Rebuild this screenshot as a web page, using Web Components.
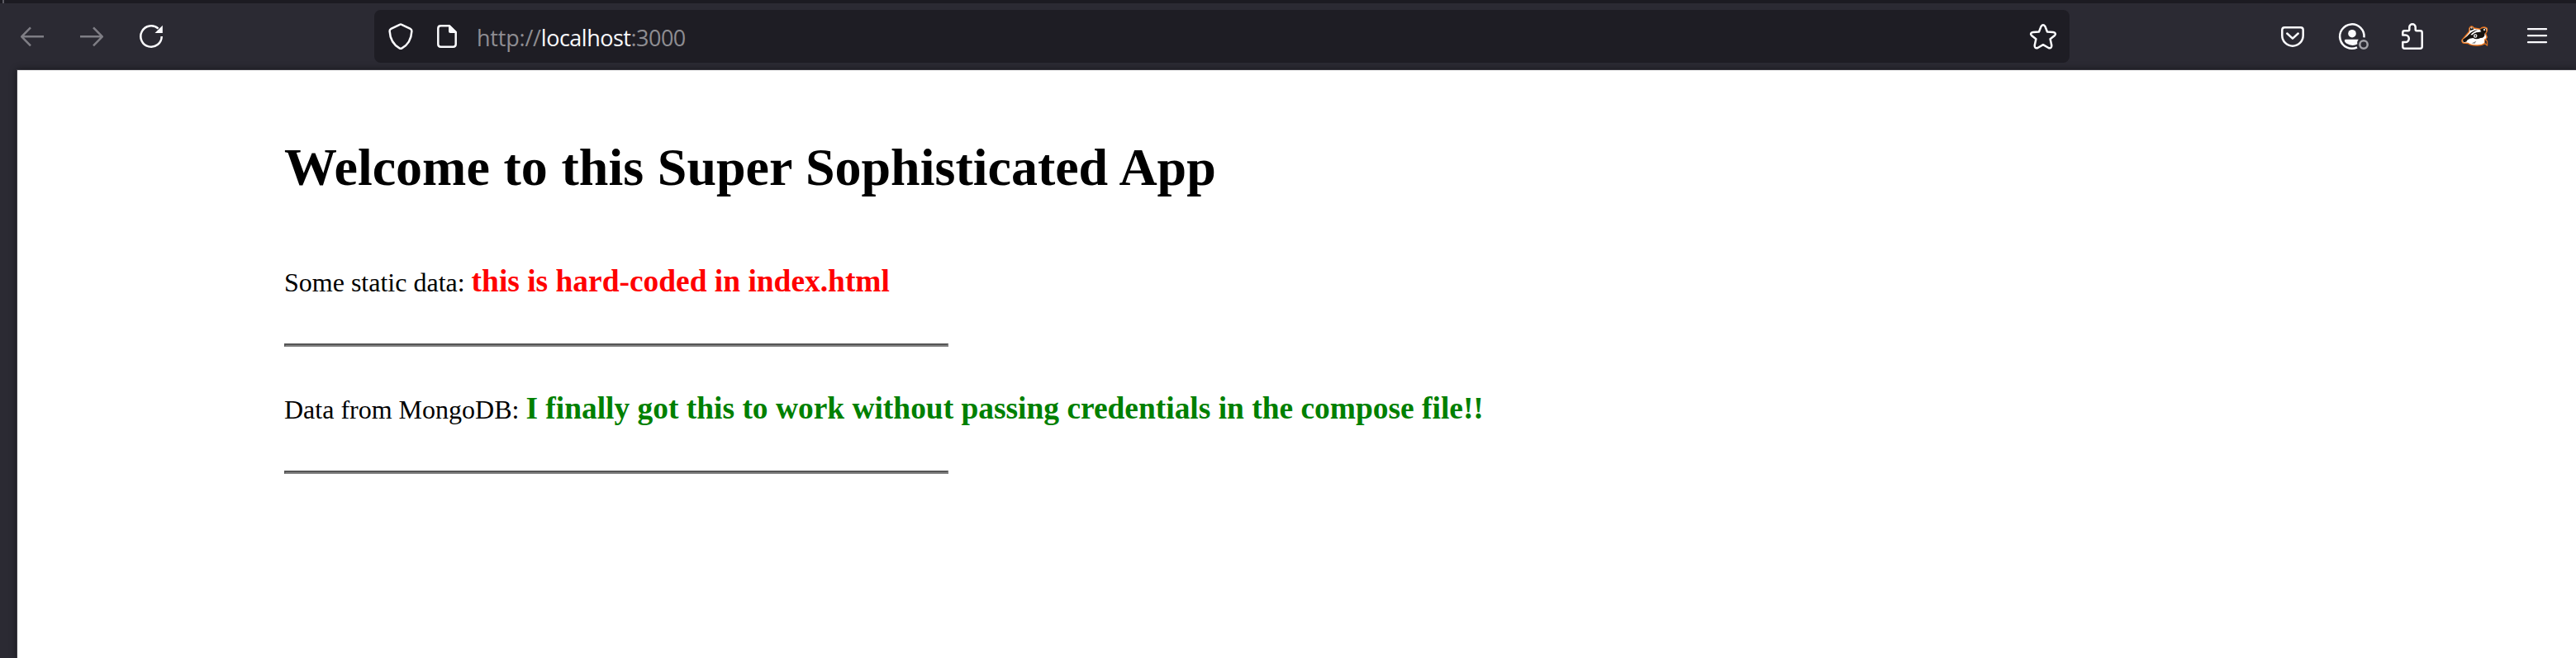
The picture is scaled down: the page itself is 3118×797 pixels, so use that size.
<!DOCTYPE html>
<html lang="en">
<head>
<meta charset="utf-8">
<title>Super Sophisticated App</title>
<style>
html, body { margin: 0; height: 100%; overflow: hidden; background: #2b2a33; }
</style>
</head>
<body>
<browser-window>
  <browser-toolbar slot="toolbar"></browser-toolbar>
  <app-page>
    <span slot="title">Welcome to this Super Sophisticated App</span>
    <data-row color="#ff0000" label="Some static data:">this is hard-coded in index.html</data-row>
    <data-row color="#008000" label="Data from MongoDB:">I finally got this to work without passing credentials in the compose file!!</data-row>
  </app-page>
</browser-window>

<script>
const ICONS = {
  back: '<path d="M30 16.3H3M14 5.3L3.2 16.3L14 27.3" stroke="#7f7e85"/>',
  forward: '<path d="M2 16.3H29M18 5.3L28.8 16.3L18 27.3" stroke="#7f7e85"/>',
  reload: '<path d="M28.7 16A12.7 12.7 0 1 1 24.6 6.7"/><path d="M29.8 2.7V12H20.5Z" fill="currentColor" stroke="none"/>',
  shield: '<path d="M14.8 1.8Q16 1 17.2 1.8L27.7 6.8Q29.5 7.7 29.4 9.7C28.8 19.5 25.5 26 17.5 30.3Q16 31.1 14.5 30.3C6.5 26 3.2 19.5 2.6 9.7Q2.5 7.7 4.3 6.8Z"/>',
  page: '<path d="M8.5 3.3H19L26.7 11V25.5Q26.7 28.7 23.5 28.7H8.5Q5.3 28.7 5.3 25.5V6.5Q5.3 3.3 8.5 3.3Z"/><path d="M18 2.5H19.5L27.5 10.5V12H20Q18 12 18 10Z" fill="currentColor" stroke="none"/>',
  star: '<path d="M13.6 3.9Q16 .6 18.400 3.900L21 10.500L28 11.100Q32.600 12 30 15L24.600 19.300L26.300 26.900Q26.300 31.300 22.600 30L16 26.200L9.400 30Q5.700 31.300 5.700 26.900L7.400 19.300L2 15Q-.600 12 4 11.100L11 10.500Z"/>',
  pocket: '<path d="M6.300 5.300H25.700Q28.700 5.300 28.700 8.300V15A12.700 12.700 0 0 1 3.300 15V8.300Q3.300 5.300 6.300 5.300Z"/><path d="M9.300 12.500L16 18.700L22.700 12.500" stroke-linecap="round"/>',
  account: '<path d="M22 29.400A14.700 14.700 0 1 1 30.500 17.300"/><circle cx="16" cy="12.700" r="4.800" fill="currentColor" stroke="none"/><path d="M8.500 19.700H23.800Q21.300 23 22.600 25.300Q16 29 9 24.500Q6.700 22.500 6.800 21Q7 19.700 8.500 19.700Z" fill="currentColor" stroke="none"/><circle cx="30" cy="26" r="4.700" stroke="#a3a2a8"/>',
  puzzle: '<path d="M7.500 9.300H11.800Q13.300 9.300 13.300 7.800V5A3.700 3.700 0 0 1 20.700 5V7.800Q20.700 9.300 22.200 9.300H26.500Q28.700 9.300 28.700 11.500V28.500Q28.700 30.700 26.500 30.700H7.500Q5.300 30.700 5.300 28.500V23H8.600A4.200 4.200 0 0 0 8.600 14.600H5.300V11.500Q5.300 9.300 7.500 9.300Z"/>',
  badger: `<path d="M1 20.500L9.500 10.500L10 6Q12.500 1.800 15.500 6L23 7.200Q26.500 3.700 31 6Q32.500 9 29.500 12.500L31.200 17L29.500 20L31.500 22V27L28.500 24.500Q25 27.500 18 27Q11.500 27 8.500 24.500L2.500 24Q.5 23 1 20.500Z" fill="#fff" stroke="#e8731c" stroke-width="1.400"/>
    <path d="M28.500 19.500L31.300 22V26.500L28.300 24Z" fill="#2b2a33" stroke="#e8731c" stroke-width=".8"/>
    <g stroke="none"><path d="M10.500 9L11 6.200Q12.500 3.800 14.500 6L15 8Z M22.500 8Q26.500 4.500 30.200 7Q31.200 9.500 29 12.500L25.500 12Z" fill="#15120f"/>
    <path d="M2 20Q7 16.500 10.500 12.500Q15 8.500 20 8Q14 11 11.500 14.500Q17 10.500 21.500 11Q26 9 28.500 12Q29 18 23.500 18Q18 20.500 14.500 18Q10 18 7.500 20.500Q6.500 24 2.500 22.800Z" fill="#15120f"/>
    <path d="M11.500 14Q17 8.200 24.500 8.500Q18 9.800 13.300 14.500Z" fill="#fff"/><circle cx="17.200" cy="15.500" r="2.200" fill="#fff"/><circle cx="17.300" cy="15.500" r="1" fill="#15120f"/>
    <path d="M12.500 24.500L18.500 21.500L16.500 24.800Z" fill="#8b8988"/></g><circle cx="12.700" cy="5.900" r=".9" fill="#d7d3cf" stroke="none"/><circle cx="28" cy="8" r="1.200" fill="#d7d3cf" stroke="none"/>`,
  menu: '<path d="M5 7.200H27M5 15.200H27M5 23.200H27" stroke-linecap="round" stroke-width="2.300"/>'
};

function define(name, markup, setup) {
  const template = document.createElement('template');
  template.innerHTML = markup;
  customElements.define(name, class extends HTMLElement {
    connectedCallback() {
      if (this.shadowRoot) return;
      this.attachShadow({ mode: 'open' }).append(template.content.cloneNode(true));
      if (setup) setup(this, this.shadowRoot);
    }
  });
}

define('ui-icon', `
<style>
:host { display: flex; flex: none; align-items: center; justify-content: center; width: 72px; height: 64px; color: #fbfbfe; }
svg { display: block; width: 32px; height: 32px; overflow: visible; fill: none; stroke: currentColor; stroke-width: 2.5; stroke-linejoin: round; }
</style>
<svg viewBox="0 0 32 32"></svg>`, (host, root) => {
  root.querySelector('svg').innerHTML = ICONS[host.getAttribute('name')];
});

define('address-bar', `
<style>
:host { display: flex; align-items: center; box-sizing: border-box; width: 2052px; height: 64px; border-radius: 8px; background: #1e1d24; padding-left: 4px; }
ui-icon { width: 56px; }
.url { flex: 1; margin-left: 8px; padding-top: 3px; font: 27px/64px "Open Sans", "Noto Sans", sans-serif; color: #8e8d92; white-space: pre; }
.url b { font-weight: 400; color: #fbfbfe; letter-spacing: -.5px; }
.scheme { letter-spacing: -.2px; }
.port { letter-spacing: -.5px; }
ui-icon.star { width: 64px; }
</style>
<ui-icon name="shield"></ui-icon><ui-icon name="page"></ui-icon>
<div class="url"><span class="scheme">http://</span><b>localhost</b><span class="port">:3000</span></div>
<ui-icon class="star" name="star"></ui-icon>`);

define('browser-toolbar', `
<style>
:host { display: flex; align-items: center; box-sizing: border-box; height: 80px; padding-left: 3px; background: #2b2a33; }
address-bar { margin-left: 234px; }
.actions { display: flex; margin-left: 234px; }
.wide { width: 80px; }
</style>
<ui-icon name="back"></ui-icon><ui-icon name="forward"></ui-icon><ui-icon name="reload"></ui-icon>
<address-bar></address-bar>
<div class="actions">
  <ui-icon name="pocket"></ui-icon><ui-icon name="account"></ui-icon><ui-icon name="puzzle"></ui-icon>
  <ui-icon class="wide" name="badger"></ui-icon><ui-icon name="menu"></ui-icon>
</div>`);

define('browser-window', `
<style>
:host { display: flex; flex-direction: column; width: 3118px; height: 797px; overflow: hidden; background: #2b2a33; }
.tabs { flex: none; height: 4px; background: #1c1b22; }
.tabs i { display: block; width: 2px; height: 4px; margin-left: 3px; background: #5b5a62; }
.view { flex: 1; display: flex; padding: 1px 0 0 21px; }
</style>
<div class="tabs"><i></i></div>
<slot name="toolbar"></slot>
<div class="view"><slot></slot></div>`);

define('app-page', `
<style>
:host { display: block; flex: 1; box-sizing: border-box; padding: 81px 0 0 323px; background: #fff; color: #000; font-family: "Liberation Serif", "Times New Roman", serif; box-shadow: 0 0 0 1px #3e3d45, 0 0 8px 1px rgba(0,0,0,.45); }
h1 { margin: 0 0 67px; font-size: 64px; line-height: 74px; font-weight: 700; word-spacing: .7px; white-space: nowrap; }
</style>
<h1><slot name="title"></slot></h1>
<slot></slot>`);

define('data-row', `
<style>
:host { display: block; height: 154px; font-size: 32px; white-space: nowrap; }
p { margin: 0; height: 109px; line-height: 70px; }
b { font-size: 37.44px; line-height: 1; }
hr { box-sizing: border-box; width: 804px; height: 4px; margin: 0; border: 2px solid; border-color: #555 #808080 #808080 #555; }
</style>
<p><span></span> <b><slot></slot></b></p>
<hr>`, (host, root) => {
  root.querySelector('span').textContent = host.getAttribute('label');
  root.querySelector('b').style.color = host.getAttribute('color');
});
</script>
</body>
</html>
